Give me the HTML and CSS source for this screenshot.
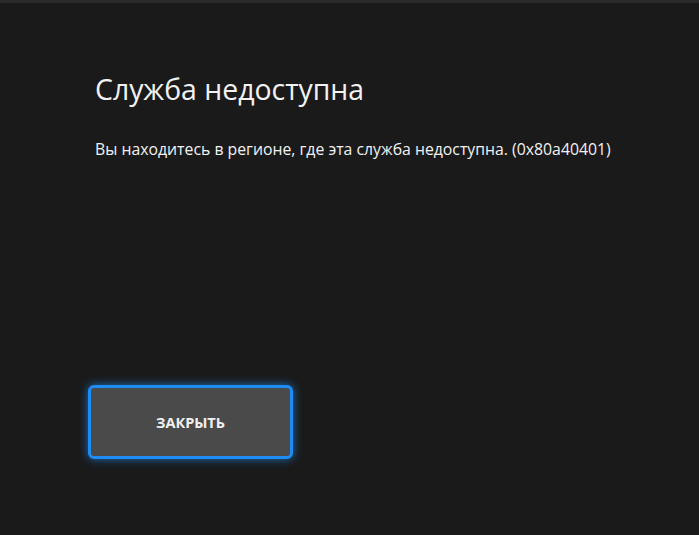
FILE: index.html
```html
<!DOCTYPE html>
<html lang="ru">
<head>
    <meta charset="UTF-8">
    <meta name="viewport" content="width=device-width, initial-scale=1.0">
    <title>Служба недоступна</title>
    <link rel="stylesheet" href="styles.css">
</head>
<body>
    <div class="screen">
        <div class="dialog">
            <h1 class="title">Служба недоступна</h1>
            <p class="message">Вы находитесь в регионе, где эта служба недоступна. (0x80a40401)</p>
            <button class="btn">ЗАКРЫТЬ</button>
        </div>
    </div>
</body>
</html>
```

FILE: styles.css
```css
html, body {
    margin: 0;
    padding: 0;
    height: 100%;
}
body {
    background-color: #1a1a1a;
    font-family: "Open Sans", "Noto Sans", sans-serif;
    color: #f2f2f2;
}
.screen {
    height: 100%;
    border-top: 3px solid #2a2a2a;
    box-sizing: border-box;
}
.dialog {
    display: flex;
    flex-direction: column;
    align-items: flex-start;
    padding: 66px 0 0 95px;
}
.title {
    margin: 0;
    font-size: 28.4px;
    font-weight: 400;
    line-height: 40px;
}
.message {
    margin: 30px 0 0 0;
    font-size: 15.8px;
    line-height: 20px;
}
.btn {
    margin: 226px 0 0 -7px;
    width: 205px;
    height: 74px;
    background-color: #4a4a4a;
    border: 3px solid #1e8cf5;
    border-radius: 6px;
    box-shadow: 0 0 10px rgba(30, 140, 245, 0.75);
    color: #f0f0f0;
    font-family: "Open Sans", sans-serif;
    font-size: 14.5px;
    font-weight: 700;
}
```
